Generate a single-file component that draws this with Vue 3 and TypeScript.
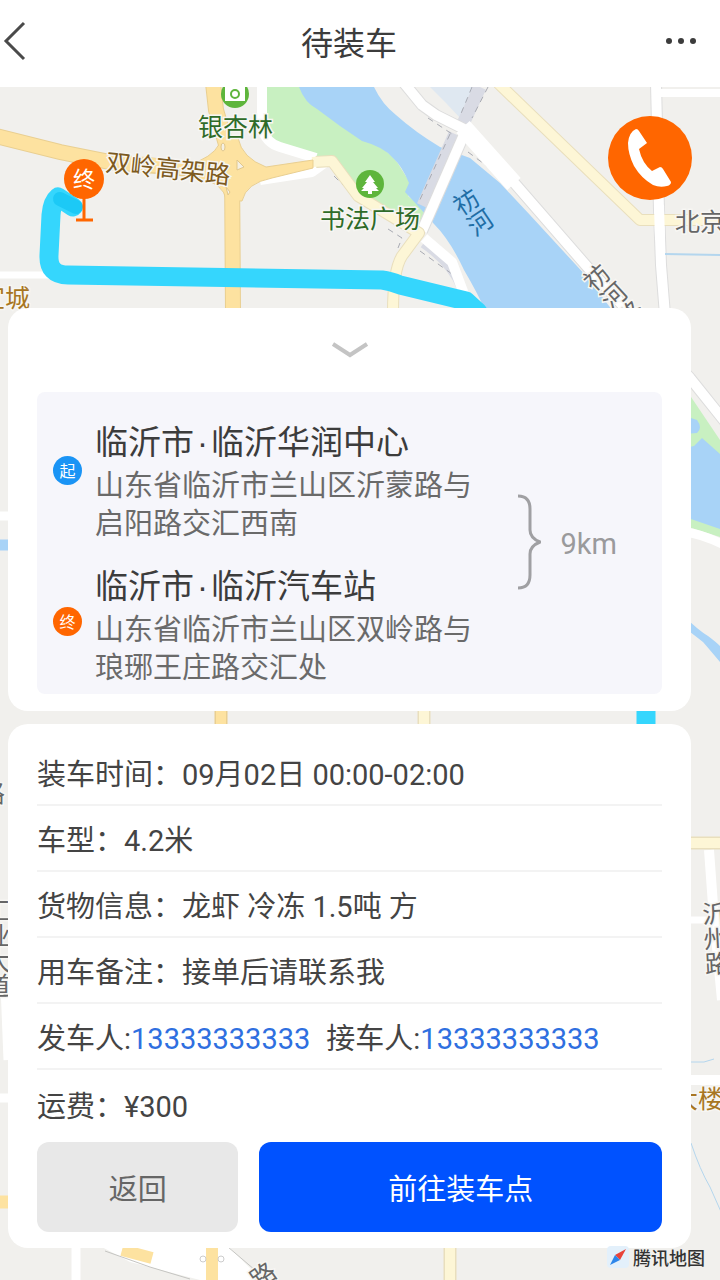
<script setup lang="ts">
interface Stop {
  name: string
  place: string
  address: string
}

interface Detail {
  label: string
  value: string
}

interface Contact {
  label: string
  phone: string
}

const stops: Stop[] = [
  { name: '临沂市', place: '临沂华润中心', address: '山东省临沂市兰山区沂蒙路与启阳路交汇西南' },
  { name: '临沂市', place: '临沂汽车站', address: '山东省临沂市兰山区双岭路与琅琊王庄路交汇处' },
]

const details: Detail[] = [
  { label: '装车时间', value: '09月02日 00:00-02:00' },
  { label: '车型', value: '4.2米' },
  { label: '货物信息', value: '龙虾 冷冻 1.5吨 方' },
  { label: '用车备注', value: '接单后请联系我' },
]

const contacts: Contact[] = [
  { label: '发车人', phone: '13333333333' },
  { label: '接车人', phone: '13333333333' },
]
</script>

<template>
  <div class="page" lang="zh-CN">
    <header class="bar">
      <button class="bar-btn back" type="button" aria-label="返回上一页">
        <svg width="26" height="42" viewBox="0 0 26 42" fill="none" stroke="#4a4a4a" stroke-width="3">
          <path d="M24 3 6 21 24 39" />
        </svg>
      </button>
      <h1 class="bar-title">待装车</h1>
      <button class="bar-btn more" type="button" aria-label="更多">
        <svg width="34" height="8" viewBox="0 0 34 8" fill="#3c3c3c">
          <circle cx="5" cy="4" r="3" />
          <circle cx="17" cy="4" r="3" />
          <circle cx="29" cy="4" r="3" />
        </svg>
      </button>
    </header>

    <main class="stage">
      <svg class="map" viewBox="0 87 720 1193" preserveAspectRatio="xMidYMin slice" aria-hidden="true">
        <rect x="0" y="87" width="720" height="1193" fill="#f1f0ed" />

        <!-- park and river -->
        <path fill="#c8f0c1" d="M266 87H310L362 138 380 147Q395 156 402 170L411 184 408 196 425 210 414 236 380 212 350 186 330 160 300 154 268 140Z" />
        <path fill="#a8d3f7" d="M299 87Q305 103 317 109L340 126 362 141Q384 147 393 158 402 166 409 183L405 192 417 205 434 224Q450 240 464 270 478 294 485 310H612L588 278 530 215 500 183 470 158 440 147Q415 132 396 115 382 104 374 87Z" />
        <path fill="#dfe8f1" d="M430 87H476L462 120 446 103Z" />

        <!-- railway bands -->
        <g fill="none" stroke="#d9dbe4" stroke-width="13">
          <path d="M480 87 462 126" />
          <path d="M455 134 423 206" />
          <path stroke-width="8" d="M423 244Q450 262 461 288" />
        </g>
        <g fill="none" stroke="#a9abb3" stroke-width="1" stroke-dasharray="6 5">
          <path d="M472 87 460 116" />
          <path d="M488 87 472 118" />
          <path d="M450 134 418 204" />
          <path d="M428 118 452 134" />
          <path d="M468 152 495 172" />
          <path d="M334 176 362 204" />
          <path d="M388 229 402 238 398 248" />
          <path d="M420 251 452 274 466 290" />
        </g>

        <!-- white roads -->
        <g fill="none" stroke="#ddd" stroke-width="12" stroke-linejoin="round">
          <path d="M404 83 422 105 436 115 466 130" />
          <path d="M466 130 422 231" />
          <path d="M510 178 590 270 690 378 730 428" />
          <path d="M656 83 659 210 661 265 665 315" />
        </g>
        <g fill="none" stroke="#fff" stroke-width="10" stroke-linejoin="round">
          <path d="M262 83V128Q266 143 280 147L316 158" />
          <path d="M404 83 422 105 436 115 466 130" />
          <path d="M466 130 422 231" />
          <path stroke-width="18" d="M463 127 514 184" />
          <path d="M510 178 590 270 690 378 730 428" />
          <path d="M424 238 452 262 464 294" />
          <path d="M656 83 659 210 661 265 665 315" />
          <path stroke-width="8" d="M660 93H720" />
          <path stroke-width="7" d="M0 275H50" />
          <path d="M260 180 312 172 326 162" />
        </g>
        <path d="M665 254 720 255" fill="none" stroke="#b4d6ee" stroke-width="2" />

        <!-- secondary roads -->
        <g fill="none" stroke-linejoin="round">
          <path stroke="#e9dfbd" stroke-width="12" d="M498 83 640 220H720" />
          <path stroke="#fdf6d6" stroke-width="10" d="M498 83 640 220H720" />
          <path stroke="#e9dfbd" stroke-width="12" d="M316 162 332 161 358 196 419 233 402 256Q393 270 393 312" />
          <path stroke="#fdf6d6" stroke-width="10" d="M312 162 332 161 358 196 419 233 402 256Q393 270 393 312" />
        </g>
        <path d="M659 205 660 240" stroke="#fff" stroke-width="10" />

        <!-- main roads -->
        <g fill="none" stroke="#e9cf91" stroke-width="16">
          <path d="M-4 136 60 152 110 162 215 171" />
          <path d="M213 83 216 110 232 165 233 312" />
        </g>
        <path fill="#fde2a0" stroke="#e9cf91" d="M199 161Q219 152 221 138H238Q242 158 266 167L313 160V168L272 178Q246 183 242 201H227Q222 181 199 179Z" />
        <g fill="none" stroke="#fde2a0" stroke-width="14">
          <path d="M-4 136 60 152 110 162 235 171" />
          <path d="M213 83 216 110 232 165 233 312" />
        </g>
        <g fill="#f5f0e3" stroke="#e0c78c">
          <ellipse cx="223" cy="147" rx="2" ry="4" />
          <path d="M237 160 244 167 237 170Z" />
          <path d="M226 187 230 192 228 195Z" />
        </g>

        <!-- strips at the edges of the cards -->
        <path d="M0 516H20M0 1098H20" stroke="#fff" stroke-width="9" />
        <path d="M0 545H20" stroke="#a8d3f7" stroke-width="11" />
        <path d="M221 700V740" stroke="#e9cf91" stroke-width="13" />
        <path d="M221 700V740" stroke="#fde2a0" stroke-width="10" />
        <path d="M424 700V740" stroke="#e9dfbd" stroke-width="13" />
        <path d="M424 700V740" stroke="#fdf6d6" stroke-width="10" />
        <path fill="#c8f0c1" d="M685 388 720 440V537L685 526Z" />
        <path fill="#a8d3f7" d="M685 448 694 446 702 438 720 454V529L685 517ZM685 416 697 420Q703 428 697 433L685 434Z" />
        <path fill="none" stroke="#fff" stroke-width="9" d="M685 532Q702 534 724 545" />
        <path fill="#a8d3f7" d="M685 617Q698 630 708 636 716 642 720 646V662Q710 650 703 642L685 628Z" />
        <path d="M680 843H720" stroke="#e9dfbd" stroke-width="13" />
        <path d="M680 843H720" stroke="#fdf6d6" stroke-width="10" />
        <g fill="none" stroke="#fff" stroke-width="10">
          <path d="M709 850 713 905 722 1000" />
          <path stroke-width="7" d="M680 920H712" />
          <path d="M680 1080H720" />
          <path stroke-width="9" d="M76 1240V1280" />
        </g>
        <path d="M5 985 8 1060" stroke="#fff" stroke-width="9" />
        <path fill="none" stroke="#b4d6ee" stroke-width="1" d="M685 1062H704L714 1059M691 1143Q700 1170 710 1187L722 1214" />

        <!-- lower interchange -->
        <path fill="#fff" d="M100 1246H228L262 1280H200L130 1262Z" />
        <path d="M105 1251 150 1267 190 1279M228 1247 262 1276" fill="none" stroke="#c5c5c2" />
        <path d="M122 1250 152 1258" stroke="#fde2a0" stroke-width="12" />
        <path d="M212 1240V1280" stroke="#fde2a0" stroke-width="12" />
        <path d="M450 1240V1280" stroke="#e9dfbd" stroke-width="13" />
        <path d="M450 1240V1280" stroke="#fdf6d6" stroke-width="10" />
        <path d="M0 1202H10" stroke="#fde2a0" stroke-width="13" />
        <circle cx="203" cy="1259" r="3" fill="none" stroke="#ccc" />
        <circle cx="221" cy="1259" r="3" fill="none" stroke="#ccc" />

        <!-- driving route -->
        <g fill="none" stroke="#35d6fd" stroke-width="19" stroke-linejoin="round">
          <path stroke-linecap="round" d="M73 207 58 197Q52 202 51 215L49 255Q48 275 68 275L382 280Q390 281 400 285L466 301 478 312" />
          <path d="M646 700V740" />
        </g>
        <path d="M60 199 76 207" stroke="#1cc9f6" stroke-width="14" stroke-linecap="round" />

        <!-- park symbols -->
        <circle cx="235" cy="94" r="14" fill="#5eb53c" />
        <path d="M225 82H245V101H225Z" fill="#fff" />
        <circle cx="235" cy="94" r="4" fill="none" stroke="#5eb53c" stroke-width="2" />
        <circle cx="370" cy="184" r="14" fill="#5eb53c" />
        <path fill="#fff" d="M370 175 375 182H373L378 188H376L379 191H372V194H368V191H361L364 188H362L367 182H365Z" />

        <!-- place names -->
        <g class="label">
          <text class="green" x="198" y="136">银杏林</text>
          <text class="green" x="320" y="228">书法广场</text>
          <text class="brown" transform="translate(105 171) rotate(6)">双岭高架路</text>
          <text class="gold" x="-20" y="307">宜城</text>
          <text class="gold" x="673" y="1108">大楼</text>
          <text class="grey" x="675" y="231">北京</text>
          <text class="river upright" transform="translate(459 191) rotate(-34)">祊河</text>
          <text class="grey upright" transform="translate(588 268) rotate(-43)">祊河路</text>
          <text class="grey upright" transform="translate(714 901) rotate(-3)">沂州路</text>
          <text class="grey upright" x="-2" y="898">工业大道</text>
          <text class="grey" x="-20" y="802">路</text>
          <text class="grey" transform="translate(258 1290) rotate(-35)">路</text>
        </g>

        <!-- destination pin -->
        <path d="M84 198V220M76 220H93" stroke="#ff6600" stroke-width="3" fill="none" />
        <circle cx="84" cy="179" r="20" fill="#ff6600" />
        <text class="pin-text" x="84" y="187" text-anchor="middle">终</text>
      </svg>

      <button class="call" type="button" aria-label="拨打电话">
        <svg width="84" height="84" viewBox="0 0 84 84">
          <path fill="#fff" d="M28 13Q30 13 31 15L39 27 31 33Q34 47 44 55L52 51Q54 51 55 53L63 66Q63 69 59 70 52 72 45 69 33 62 26 50 20 38 20 27 21 16 28 13Z" />
        </svg>
      </button>

      <section class="card route-card" aria-label="路线">
        <button class="fold" type="button" aria-label="收起">
          <svg width="38" height="18" viewBox="0 0 38 18" fill="none" stroke="#c4c4c4" stroke-width="4">
            <path d="M2 3 19 14 36 3" />
          </svg>
        </button>
        <div class="route">
          <div class="badges">
            <span class="badge from">起</span>
            <span class="badge to">终</span>
          </div>
          <div class="stops">
            <div v-for="stop in stops" :key="stop.place" class="stop">
              <h2 class="stop-name">{{ stop.name }}<span class="dot">·</span>{{ stop.place }}</h2>
              <p class="stop-address">{{ stop.address }}</p>
            </div>
          </div>
          <svg class="brace" width="24" height="98" viewBox="0 0 24 98" fill="none" stroke="#a0a0a3" stroke-width="3">
            <path d="M1 3Q13 3 13 16V37Q13 45 23 49 13 53 13 61V82Q13 95 1 95" />
          </svg>
          <span class="distance">9km</span>
        </div>
      </section>

      <section class="card info-card" aria-label="订单信息">
        <p v-for="item in details" :key="item.label" class="row">{{ item.label }}：{{ item.value }}</p>
        <p class="row contacts">
          <span v-for="contact in contacts" :key="contact.label">{{ contact.label }}:<a class="phone" :href="'tel:' + contact.phone">{{ contact.phone }}</a></span>
        </p>
        <p class="row fee">运费：¥300</p>
        <div class="actions">
          <button class="action plain" type="button">返回</button>
          <button class="action primary" type="button">前往装车点</button>
        </div>
      </section>

      <div class="credit">
        <svg width="22" height="22" viewBox="0 0 22 22">
          <rect width="22" height="22" rx="4" fill="#e3f0fb" />
          <path fill="#e8433a" d="M19 3 8 9 13 14Z" />
          <path fill="#2d86ea" d="M3 19 8 9 13 14Z" />
        </svg>
        <span>腾讯地图</span>
      </div>
    </main>
  </div>
</template>

<style>
body {
  background: #f1f0ed;
}
</style>

<style scoped>
.page {
  display: flex;
  flex-direction: column;
  min-height: 100vh;
  font-family: "Noto Sans CJK SC", "Noto Sans", sans-serif;
  color: #444;
}

.page *,
.page {
  box-sizing: border-box;
}

h1,
h2,
p {
  margin: 0;
  font-weight: 400;
}

button {
  margin: 0;
  padding: 0;
  border: 0;
  background: none;
  font: inherit;
  cursor: pointer;
}

svg {
  display: block;
}

.bar {
  display: grid;
  grid-template-columns: 1fr auto 1fr;
  align-items: center;
  height: 87px;
  padding: 0 22px 6px 0;
  background: #fff;
}

.bar-btn.back {
  justify-self: start;
}

.bar-btn.more {
  justify-self: end;
}

.bar-title {
  font-size: 32px;
  line-height: 48px;
  color: #3c3c3c;
}

.stage {
  position: relative;
  display: flex;
  flex: 1;
  flex-direction: column;
  gap: 13px;
  padding: 221px 29px 32px 8px;
  overflow: hidden;
}

.map {
  position: absolute;
  inset: 0;
  width: 100%;
  height: 100%;
}

.label {
  font-size: 25px;
  stroke: #f7f6f3;
  stroke-width: 3px;
  paint-order: stroke;
}

.green {
  fill: #2f6b28;
}

.brown {
  fill: #7d5a20;
}

.gold {
  fill: #a87622;
}

.grey {
  fill: #666;
}

.river {
  fill: #1f6ea6;
  stroke: none;
}

.upright {
  writing-mode: vertical-rl;
}

.pin-text {
  font-size: 22px;
  fill: #fff;
}

.call {
  position: absolute;
  top: 29px;
  right: 28px;
  width: 84px;
  height: 84px;
  border-radius: 50%;
  background: #ff6600;
}

.card {
  position: relative;
  border-radius: 20px;
  background: #fff;
}

.route-card {
  padding: 0 29px 17px;
}

.fold {
  display: flex;
  align-items: center;
  justify-content: center;
  width: 100%;
  height: 84px;
}

.route {
  display: flex;
  align-items: center;
  padding: 24px 45px 10px 16px;
  border-radius: 8px;
  background: #f6f6fb;
}

.badges {
  display: flex;
  flex-direction: column;
  align-self: flex-start;
  gap: 122px;
  padding-top: 40px;
}

.badge {
  width: 29px;
  height: 29px;
  border-radius: 50%;
  font-size: 16px;
  line-height: 29px;
  text-align: center;
  color: #fff;
}

.badge.from {
  background: #1a94f5;
}

.badge.to {
  background: #ff6600;
}

.stops {
  display: flex;
  flex: 1;
  flex-direction: column;
  gap: 20px;
  margin: 0 32px 0 13px;
}

.stop-name {
  font-size: 33px;
  line-height: 48px;
  color: #3c3c3c;
}

.dot {
  padding: 0 3px;
  font-family: "Liberation Sans", sans-serif;
  line-height: 1;
}

.stop-address {
  font-size: 29px;
  line-height: 38px;
  color: #6a6a6a;
}

.brace {
  flex: none;
  margin-bottom: 16px;
}

.distance {
  margin: 0 0 12px 20px;
  font-family: Roboto, sans-serif;
  font-size: 29px;
  line-height: 40px;
  color: #9a9a9c;
}

.info-card {
  padding: 16px 29px;
}

.row {
  min-height: 66px;
  padding-top: 6px;
  border-bottom: 2px solid #f3f3f3;
  font-family: Roboto, "Noto Sans CJK SC", sans-serif;
  font-size: 29px;
  line-height: 58px;
}

.contacts {
  display: flex;
  flex-wrap: wrap;
  gap: 0 16px;
}

.phone {
  color: #2f6fe0;
  text-decoration: none;
}

.fee {
  min-height: 72px;
  padding-top: 8px;
  border-bottom: 0;
}

.actions {
  display: grid;
  grid-template-columns: 1fr 2fr;
  gap: 21px;
}

.action {
  height: 90px;
  border-radius: 12px;
  font-size: 29px;
}

.plain {
  background: #e8e8e8;
  color: #666;
}

.primary {
  background: #0052ff;
  color: #fff;
}

.credit {
  position: absolute;
  right: 15px;
  bottom: 11px;
  display: flex;
  align-items: center;
  gap: 4px;
  font-size: 18px;
  line-height: 24px;
  font-weight: 500;
  color: #333;
}
</style>
